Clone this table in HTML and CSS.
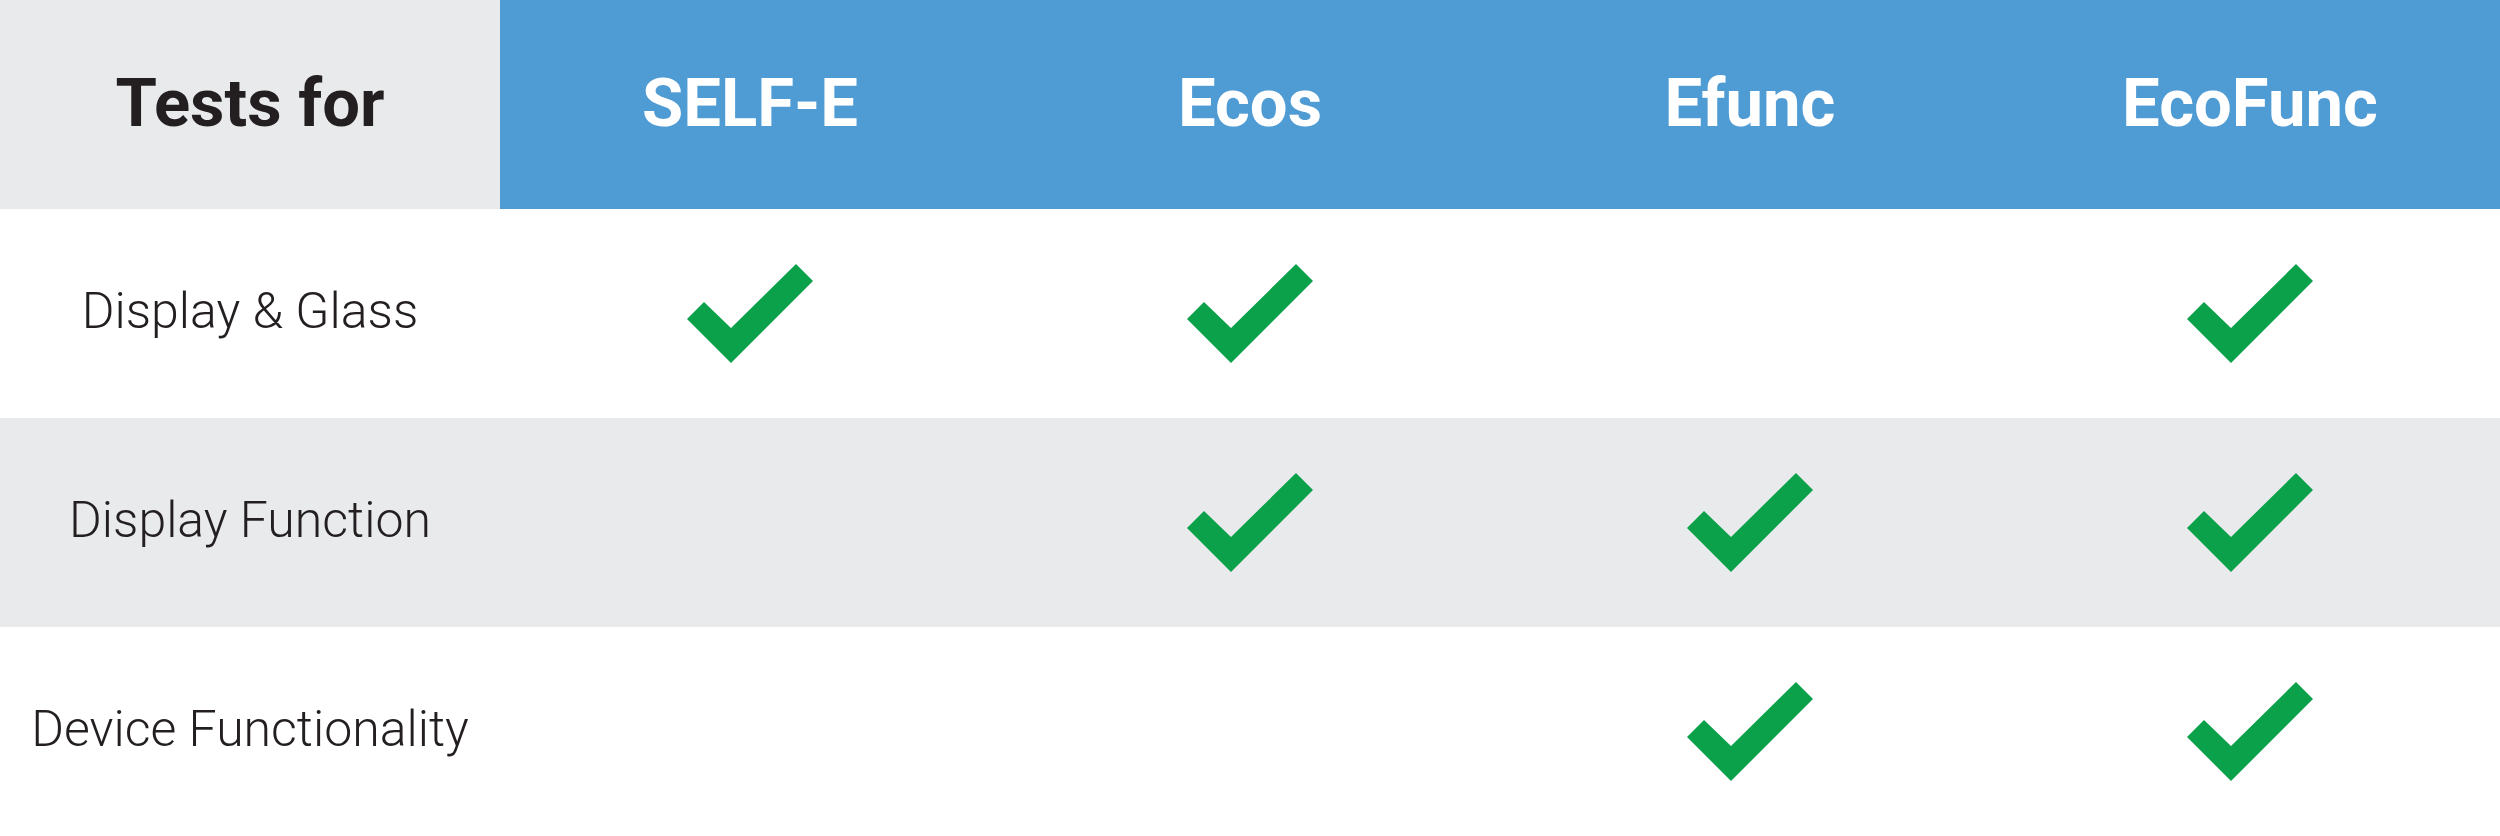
FILE: index.html
```html
<!DOCTYPE html>
<html>
<head>
<meta charset="utf-8">
<link rel="stylesheet" href="styles.css">
</head>
<body>
<div class="table">
  <div class="row head">
    <div class="cell label-head">Tests for</div>
    <div class="cell prod">SELF-E</div>
    <div class="cell prod">Ecos</div>
    <div class="cell prod">Efunc</div>
    <div class="cell prod">EcoFunc</div>
  </div>
  <div class="row">
    <div class="cell label">Display &amp; Glass</div>
    <div class="cell"><svg class="check" viewBox="0 0 126 100"><polygon points="0,55 17,38 44,64 109,0 126,17 44,99"/></svg></div>
    <div class="cell"><svg class="check" viewBox="0 0 126 100"><polygon points="0,55 17,38 44,64 109,0 126,17 44,99"/></svg></div>
    <div class="cell"></div>
    <div class="cell"><svg class="check" viewBox="0 0 126 100"><polygon points="0,55 17,38 44,64 109,0 126,17 44,99"/></svg></div>
  </div>
  <div class="row alt">
    <div class="cell label">Display Function</div>
    <div class="cell"></div>
    <div class="cell"><svg class="check" viewBox="0 0 126 100"><polygon points="0,55 17,38 44,64 109,0 126,17 44,99"/></svg></div>
    <div class="cell"><svg class="check" viewBox="0 0 126 100"><polygon points="0,55 17,38 44,64 109,0 126,17 44,99"/></svg></div>
    <div class="cell"><svg class="check" viewBox="0 0 126 100"><polygon points="0,55 17,38 44,64 109,0 126,17 44,99"/></svg></div>
  </div>
  <div class="row">
    <div class="cell label">Device Functionality</div>
    <div class="cell"></div>
    <div class="cell"></div>
    <div class="cell"><svg class="check" viewBox="0 0 126 100"><polygon points="0,55 17,38 44,64 109,0 126,17 44,99"/></svg></div>
    <div class="cell"><svg class="check" viewBox="0 0 126 100"><polygon points="0,55 17,38 44,64 109,0 126,17 44,99"/></svg></div>
  </div>
</div>
</body>
</html>
```
FILE: styles.css
```css
html, body {
  margin: 0;
  padding: 0;
  background: #ffffff;
}
body {
  font-family: Roboto, "Liberation Sans", sans-serif;
  color: #231f20;
}
.table {
  width: 2500px;
  display: flex;
  flex-direction: column;
}
.row {
  display: grid;
  grid-template-columns: repeat(5, 500px);
  height: 209px;
  background: #ffffff;
}
.row.alt {
  background: #e8eaeb;
}
.cell {
  display: flex;
  align-items: center;
  justify-content: center;
}
.head .label-head {
  background: #e8eaeb;
  font-weight: 700;
  font-size: 67px;
  color: #231f20;
  padding-bottom: 4px;
}
.head .prod {
  background: #4f9bd4;
  color: #ffffff;
  font-weight: 700;
  font-size: 67px;
  padding-bottom: 4px;
}
.label {
  font-weight: 300;
  font-size: 50px;
  color: #231f20;
  padding-bottom: 6px;
}
.check {
  width: 126px;
  height: 100px;
  fill: #0ba14b;
}
```
